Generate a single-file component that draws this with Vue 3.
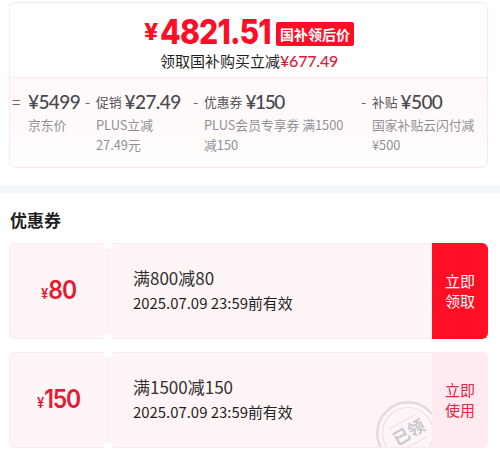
<template>
  <div class="page">
    <section class="price-card">
      <div class="price-head">
        <div class="final-price">
          <span class="final-symbol">¥</span>
          <span class="final-num">4821.51</span>
          <span class="final-tag">国补领后价</span>
        </div>
        <div class="saving">领取国补购买立减<span class="saving-num">¥677.49</span></div>
      </div>
      <div class="formula">
        <div v-for="item in formula" :key="item.desc" class="formula-item" :class="item.type">
          <span class="operator">{{ item.operator }}</span>
          <div class="formula-main">
            <div class="formula-price">
              <span v-if="item.label" class="formula-label">{{ item.label }}</span>
              <span class="formula-num">¥{{ item.price }}</span>
            </div>
            <div class="formula-desc">{{ item.desc }}</div>
          </div>
        </div>
      </div>
    </section>

    <div class="divider"></div>

    <section class="coupons">
      <h2 class="title">优惠券</h2>
      <div v-for="coupon in coupons" :key="coupon.amount" class="coupon" :class="{ received: coupon.received }">
        <div class="amount">
          <span class="amount-symbol">¥</span><span class="amount-num">{{ coupon.amount }}</span>
        </div>
        <div class="info">
          <div class="rule">{{ coupon.rule }}</div>
          <div class="expire">2025.07.09 23:59前有效</div>
          <svg v-if="coupon.received" class="stamp" width="64" height="64" viewBox="0 0 64 64">
            <circle cx="32" cy="32" r="30.7" fill="none" stroke="#dedce1" stroke-width="2.5" />
            <circle cx="32" cy="32" r="25.5" fill="none" stroke="#e7e2e7" stroke-width="1.2" />
            <g transform="rotate(-30 32 32)">
              <path d="M18 19.5H48M18 44.5H46" stroke="#ead9dd" stroke-width="1" />
              <text x="33" y="38" text-anchor="middle">已领</text>
            </g>
          </svg>
        </div>
        <button class="action">立即<br />{{ coupon.received ? '使用' : '领取' }}</button>
        <i class="notch top"></i>
        <i class="notch bottom"></i>
      </div>
    </section>
  </div>
</template>

<script setup>
const formula = [
  { type: 'base', operator: '=', label: '', price: '5499', desc: '京东价' },
  { type: 'promo', operator: '-', label: '促销', price: '27.49', desc: 'PLUS立减27.49元' },
  { type: 'ticket', operator: '-', label: '优惠券', price: '150', desc: 'PLUS会员专享券 满1500减150' },
  { type: 'subsidy', operator: '-', label: '补贴', price: '500', desc: '国家补贴云闪付减¥500' }
]

const coupons = [
  { amount: 80, rule: '满800减80', received: false },
  { amount: 150, rule: '满1500减150', received: true }
]
</script>

<style>
body {
  margin: 0;
  background: #fff;
}
</style>

<style scoped>
.page {
  width: 500px;
  height: 450px;
  overflow: hidden;
  box-sizing: border-box;
  padding-top: 2px;
  font-family: "Noto Sans CJK SC", sans-serif;
  color: #1f1f1f;
}

.price-card {
  width: 479px;
  height: 166px;
  margin-left: 9px;
  box-sizing: border-box;
  border: 1px solid #fde7eb;
  border-radius: 6px;
  overflow: hidden;
}

.price-head {
  height: 75px;
  box-sizing: border-box;
  padding-top: 11px;
  border-bottom: 1px solid #fceef0;
}

.final-price {
  display: flex;
  height: 36px;
  padding-left: 134px;
  align-items: center;
  color: #fc0f26;
  font-family: Inter, "Noto Sans CJK SC", sans-serif;
  font-weight: 800;
  white-space: nowrap;
}

.final-symbol {
  width: 16px;
  font-size: 23px;
  line-height: 43px;
  transform: scaleX(1.08);
  transform-origin: left center;
}

.final-num {
  width: 116px;
  font-size: 34.5px;
  line-height: 34px;
  letter-spacing: -1px;
  transform: scaleX(0.875);
  transform-origin: left center;
}

.final-tag {
  width: 78px;
  height: 24px;
  margin-top: 3px;
  border-radius: 2px;
  background: #fc0f26;
  color: #fff;
  font: bold 14px/24px "Noto Sans CJK SC", sans-serif;
  text-align: center;
}

.saving {
  padding-left: 150px;
  font-size: 15px;
  line-height: 22px;
  white-space: nowrap;
}

.saving-num {
  color: #d9203a;
  font-family: Lato, "Noto Sans CJK SC", sans-serif;
  font-size: 16px;
  font-weight: 500;
  letter-spacing: -0.2px;
}

.formula {
  display: flex;
  height: 90px;
  box-sizing: border-box;
  padding: 11px 0 0 2px;
  background: linear-gradient(#fff8f8, #fffdfd);
}

.formula-item {
  display: flex;
  flex: none;
}

.base {
  width: 73px;
}

.promo {
  width: 108px;
}

.ticket {
  width: 168px;
}

.subsidy {
  width: 120px;
}

.operator {
  width: 11px;
  flex: none;
  color: #6b6870;
  font-size: 15px;
  line-height: 25px;
}

.base .operator {
  width: 16px;
}

.formula-main {
  flex: 1;
  min-width: 0;
}

.promo .formula-main {
  flex: 0 0 64px;
}

.ticket .formula-main {
  flex: 0 0 145px;
}

.formula-price {
  display: flex;
  align-items: center;
  height: 25px;
  white-space: nowrap;
}

.formula-label {
  margin-right: 3px;
  color: #55555b;
  font-size: 12.8px;
}

.formula-num {
  color: #484850;
  font-family: Lato, "Noto Sans CJK SC", sans-serif;
  font-size: 19px;
  font-weight: 500;
  letter-spacing: -0.6px;
}

.ticket .formula-num {
  letter-spacing: -1.4px;
}

.formula-desc {
  margin-top: 1px;
  color: #909097;
  font-size: 12.8px;
  line-height: 20px;
}

.divider {
  height: 8px;
  margin-top: 17px;
  background: #f4f8fc;
}

.coupons {
  padding: 0 12px 0 9px;
}

.title {
  height: 50px;
  margin: 0;
  padding-left: 1px;
  font-size: 17px;
  line-height: 54px;
}

.coupon {
  position: relative;
  display: flex;
  height: 96px;
  box-sizing: border-box;
  margin-bottom: 13px;
  border: 1px solid #fbe8ea;
  border-right: 0;
  border-radius: 6px;
  background: #fff5f6;
}

.amount {
  display: flex;
  width: 97px;
  box-sizing: border-box;
  align-items: baseline;
  justify-content: center;
  padding-top: 31px;
  color: #e51b34;
  font-family: Inter, "Noto Sans CJK SC", sans-serif;
  font-weight: 600;
  line-height: 30px;
  transform: scaleX(0.92);
}

.amount-symbol {
  font-size: 14px;
}

.amount-num {
  font-size: 25px;
  letter-spacing: -1.3px;
}

.info {
  position: relative;
  flex: 1;
  padding: 21px 0 0 25px;
  border-left: 1px dashed #fbe9eb;
  overflow: hidden;
}

.rule {
  font-size: 17px;
  line-height: 26px;
  color: #303033;
}

.expire {
  font-size: 14.9px;
  line-height: 24px;
}

.stamp {
  position: absolute;
  top: 48px;
  right: -8px;
}

.stamp text {
  fill: #c8c7cf;
  font-size: 17px;
  font-weight: 700;
}

.action {
  width: 56px;
  margin: -1px 0;
  padding: 0;
  border: 0;
  border-radius: 0 6px 6px 0;
  background: #ff0f23;
  color: #fff;
  font: 15px/20px "Noto Sans CJK SC", sans-serif;
}

.received .action {
  background: #ffeaf0;
  color: #d82942;
}

.notch {
  position: absolute;
  left: 94px;
  width: 9px;
  height: 6px;
  background: #fff;
}

.top {
  top: -1px;
  border-radius: 0 0 5px 5px;
}

.bottom {
  bottom: -1px;
  border-radius: 5px 5px 0 0;
}
</style>
